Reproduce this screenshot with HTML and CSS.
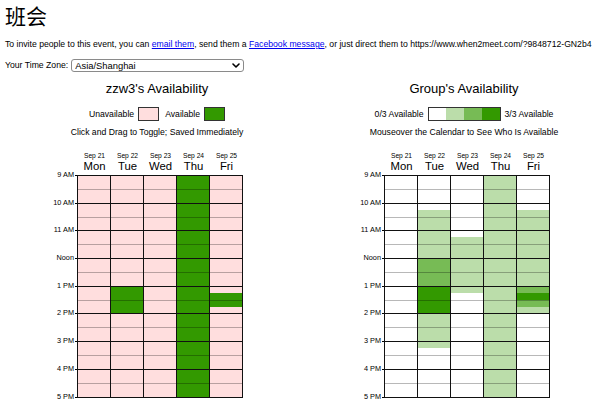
FILE: index.html
```html
<!DOCTYPE html>
<html lang="zh">
<head>
<meta charset="utf-8">
<title>班会</title>
<link rel="stylesheet" href="styles.css">
</head>
<body>
<h1 class="title">班会</h1>
<p class="invite">To invite people to this event, you can <a href="#">email them</a>, send them a <a href="#">Facebook message</a>, or just direct them to https://www.when2meet.com/?9848712-GN2b4</p>
<div class="tz">
  <label for="tz">Your Time Zone:</label>
  <span class="tz-wrap">
    <select id="tz" class="tz-select"><option>Asia/Shanghai</option></select>
    <svg class="chev" width="8" height="5" viewBox="0 0 8 5"><path d="M1 1l3 3 3-3" fill="none" stroke="#000" stroke-width="1.6" stroke-linecap="round" stroke-linejoin="round"/></svg>
  </span>
</div>

<div class="panels">
  <section class="panel">
    <h2>zzw3's Availability</h2>
    <div class="legend">
      <span>Unavailable</span><span class="swatch u"></span>
      <span class="gap">Available</span><span class="swatch a"></span>
    </div>
    <div class="hint">Click and Drag to Toggle; Saved Immediately</div>
    <div class="gridwrap">
      <div class="times">
        <div class="t">9 AM</div><div class="t">10 AM</div><div class="t">11 AM</div><div class="t">Noon</div><div class="t">1 PM</div><div class="t">2 PM</div><div class="t">3 PM</div><div class="t">4 PM</div><div class="t">5 PM</div>
      </div>
      <div class="calblock">
        <div class="days">
          <div><div class="d">Sep 21</div><div class="n">Mon</div></div>
          <div><div class="d">Sep 22</div><div class="n">Tue</div></div>
          <div><div class="d">Sep 23</div><div class="n">Wed</div></div>
          <div><div class="d">Sep 24</div><div class="n">Thu</div></div>
          <div><div class="d">Sep 25</div><div class="n">Fri</div></div>
        </div>
        <div class="cal">
          <div class="col u">
            <div></div><div></div><div></div><div></div>
            <div></div><div></div><div></div><div></div>
            <div></div><div></div><div></div><div></div>
            <div></div><div></div><div></div><div></div>
            <div></div><div></div><div></div><div></div>
            <div></div><div></div><div></div><div></div>
            <div></div><div></div><div></div><div></div>
            <div></div><div></div><div></div><div></div>
          </div>
          <div class="col u">
            <div></div><div></div><div></div><div></div>
            <div></div><div></div><div></div><div></div>
            <div></div><div></div><div></div><div></div>
            <div></div><div></div><div></div><div></div>
            <div class="a"></div><div class="a"></div><div class="a"></div><div class="a"></div>
            <div></div><div></div><div></div><div></div>
            <div></div><div></div><div></div><div></div>
            <div></div><div></div><div></div><div></div>
          </div>
          <div class="col u">
            <div></div><div></div><div></div><div></div>
            <div></div><div></div><div></div><div></div>
            <div></div><div></div><div></div><div></div>
            <div></div><div></div><div></div><div></div>
            <div></div><div></div><div></div><div></div>
            <div></div><div></div><div></div><div></div>
            <div></div><div></div><div></div><div></div>
            <div></div><div></div><div></div><div></div>
          </div>
          <div class="col a">
            <div></div><div></div><div></div><div></div>
            <div></div><div></div><div></div><div></div>
            <div></div><div></div><div></div><div></div>
            <div></div><div></div><div></div><div></div>
            <div></div><div></div><div></div><div></div>
            <div></div><div></div><div></div><div></div>
            <div></div><div></div><div></div><div></div>
            <div></div><div></div><div></div><div></div>
          </div>
          <div class="col u">
            <div></div><div></div><div></div><div></div>
            <div></div><div></div><div></div><div></div>
            <div></div><div></div><div></div><div></div>
            <div></div><div></div><div></div><div></div>
            <div></div><div class="a"></div><div class="a"></div><div></div>
            <div></div><div></div><div></div><div></div>
            <div></div><div></div><div></div><div></div>
            <div></div><div></div><div></div><div></div>
          </div>
        </div>
      </div>
    </div>
  </section>

  <section class="panel">
    <h2>Group's Availability</h2>
    <div class="legend">
      <span>0/3 Available</span>
      <span class="scale"><span class="g0"></span><span class="g1"></span><span class="g2"></span><span class="g3"></span></span>
      <span>3/3 Available</span>
    </div>
    <div class="hint">Mouseover the Calendar to See Who Is Available</div>
    <div class="gridwrap">
      <div class="times">
        <div class="t">9 AM</div><div class="t">10 AM</div><div class="t">11 AM</div><div class="t">Noon</div><div class="t">1 PM</div><div class="t">2 PM</div><div class="t">3 PM</div><div class="t">4 PM</div><div class="t">5 PM</div>
      </div>
      <div class="calblock">
        <div class="days">
          <div><div class="d">Sep 21</div><div class="n">Mon</div></div>
          <div><div class="d">Sep 22</div><div class="n">Tue</div></div>
          <div><div class="d">Sep 23</div><div class="n">Wed</div></div>
          <div><div class="d">Sep 24</div><div class="n">Thu</div></div>
          <div><div class="d">Sep 25</div><div class="n">Fri</div></div>
        </div>
        <div class="cal">
          <div class="col g0">
            <div></div><div></div><div></div><div></div>
            <div></div><div></div><div></div><div></div>
            <div></div><div></div><div></div><div></div>
            <div></div><div></div><div></div><div></div>
            <div></div><div></div><div></div><div></div>
            <div></div><div></div><div></div><div></div>
            <div></div><div></div><div></div><div></div>
            <div></div><div></div><div></div><div></div>
          </div>
          <div class="col g0">
            <div></div><div></div><div></div><div></div>
            <div></div><div class="g1"></div><div class="g1"></div><div class="g1"></div>
            <div class="g1"></div><div class="g1"></div><div class="g1"></div><div class="g1"></div>
            <div class="g2"></div><div class="g2"></div><div class="g2"></div><div class="g2"></div>
            <div class="g3"></div><div class="g3"></div><div class="g3"></div><div class="g3"></div>
            <div class="g1"></div><div class="g1"></div><div class="g1"></div><div class="g1"></div>
            <div class="g1"></div><div></div><div></div><div></div>
            <div></div><div></div><div></div><div></div>
          </div>
          <div class="col g0">
            <div></div><div></div><div></div><div></div>
            <div></div><div></div><div></div><div></div>
            <div></div><div class="g1"></div><div class="g1"></div><div class="g1"></div>
            <div class="g1"></div><div class="g1"></div><div class="g1"></div><div class="g1"></div>
            <div class="g1"></div><div></div><div></div><div></div>
            <div></div><div></div><div></div><div></div>
            <div></div><div></div><div></div><div></div>
            <div></div><div></div><div></div><div></div>
          </div>
          <div class="col g1">
            <div></div><div></div><div></div><div></div>
            <div></div><div></div><div></div><div></div>
            <div></div><div></div><div></div><div></div>
            <div></div><div></div><div></div><div></div>
            <div></div><div></div><div></div><div></div>
            <div></div><div></div><div></div><div></div>
            <div></div><div></div><div></div><div></div>
            <div></div><div></div><div></div><div></div>
          </div>
          <div class="col g0">
            <div></div><div></div><div></div><div></div>
            <div></div><div class="g1"></div><div class="g1"></div><div class="g1"></div>
            <div class="g1"></div><div class="g1"></div><div class="g1"></div><div class="g1"></div>
            <div class="g1"></div><div class="g1"></div><div class="g1"></div><div class="g1"></div>
            <div class="g2"></div><div class="g3"></div><div class="g2"></div><div class="g1"></div>
            <div></div><div></div><div></div><div></div>
            <div></div><div></div><div></div><div></div>
            <div></div><div></div><div></div><div></div>
          </div>
        </div>
      </div>
    </div>
  </section>
</div>
</body>
</html>
```
FILE: styles.css
```css
html, body {
  margin: 0;
  background: #fff;
}
body {
  padding: 0 0 0 5px;
  font-family: "Liberation Sans", Arial, "Noto Sans CJK SC", sans-serif;
  font-size: 8.67px;
  color: #000;
  overflow: hidden;
}
.title {
  margin: 0;
  font-family: "Noto Sans CJK SC", sans-serif;
  font-size: 21px;
  font-weight: normal;
  line-height: 30px;
}
.invite {
  margin: 9px 0 0;
  line-height: 11px;
  white-space: nowrap;
}
.invite a {
  color: #0000ee;
}
.tz {
  display: flex;
  align-items: center;
  gap: 3px;
  height: 13px;
  margin-top: 9px;
  line-height: 11px;
}
.tz-wrap {
  position: relative;
  display: block;
  height: 13px;
}
.tz-select {
  appearance: none;
  -webkit-appearance: none;
  display: block;
  width: 173px;
  height: 13px;
  margin: 0;
  padding: 0 0 0 3px;
  box-sizing: border-box;
  border: 1px solid #8a8a8a;
  border-radius: 3px;
  background: #fff;
  color: #000;
  font-family: "Liberation Sans", Arial, sans-serif;
  font-size: 9.4px;
  line-height: 11px;
}
.chev {
  position: absolute;
  right: 4px;
  top: 4px;
  pointer-events: none;
}
.panels {
  display: flex;
  gap: 47px;
  margin-top: 9px;
  padding-left: 22px;
}
.panel {
  width: 260px;
  flex: none;
  display: flex;
  flex-direction: column;
  align-items: center;
}
.panel h2 {
  margin: 0;
  font-size: 13px;
  font-weight: normal;
  line-height: 16px;
}
.legend {
  display: flex;
  align-items: center;
  height: 14px;
  margin-top: 10px;
  line-height: 11px;
}
.swatch {
  width: 21px;
  height: 14px;
  box-sizing: border-box;
  border: 1px solid #333;
  margin-left: 4px;
}
.gap {
  margin-left: 6px;
}
.scale {
  display: flex;
  width: 73px;
  height: 14px;
  box-sizing: border-box;
  border: 1px solid #333;
  margin: 0 4px;
}
.scale span {
  flex: 1;
}
.hint {
  margin-top: 6px;
  line-height: 11px;
}
.gridwrap {
  align-self: flex-start;
  display: flex;
  margin-left: 23px;
  margin-top: 14px;
}
.times {
  width: 27px;
  margin-top: 19px;
  display: flex;
  flex-direction: column;
}
.t {
  height: 27.7px;
  flex: none;
  display: flex;
  justify-content: flex-end;
  align-items: flex-start;
  font-size: 7.33px;
  line-height: 8px;
  white-space: nowrap;
}
.t::after {
  content: "";
  width: 2px;
  height: 1px;
  margin: 4px 0 0 1px;
  background: #000;
}
.days {
  display: grid;
  grid-template-columns: repeat(5, 33px);
  text-align: center;
  margin-bottom: 3px;
  padding-left: 1px;
}
.days .d {
  font-size: 6.67px;
  line-height: 8px;
}
.days .n {
  font-size: 11.33px;
  line-height: 12px;
}
.cal {
  display: grid;
  grid-template-columns: repeat(5, 33px);
  border-right: 1px solid #111;
  border-bottom: 1px solid #111;
}
.col {
  display: flex;
  flex-direction: column;
  border-left: 1px solid #111;
}
.col > div {
  height: 6.925px;
  flex: none;
  box-sizing: border-box;
}
.col > div:nth-child(4n+1) {
  border-top: 1px solid #111;
}
.col > div:nth-child(4n+3) {
  border-top: 1px solid rgba(0, 0, 0, 0.28);
}
.u { background: #ffdede; }
.a { background: #339900; }
.g0 { background: #fff; }
.g1 { background: #bbddaa; }
.g2 { background: #77bb55; }
.g3 { background: #339900; }
```
